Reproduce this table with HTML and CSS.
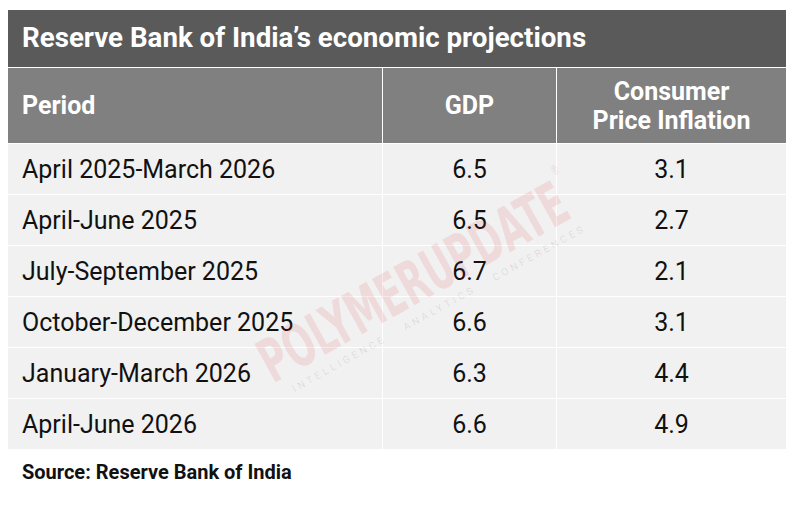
FILE: index.html
```html
<!DOCTYPE html>
<html lang="en">
<head>
<meta charset="utf-8">
<title>Reserve Bank of India’s economic projections</title>
<link rel="stylesheet" href="styles.css">
</head>
<body>
<div class="card">
  <div class="grid">
    <div class="title">Reserve Bank of India’s economic projections</div>
    <div class="hcell left">Period</div>
    <div class="hcell">GDP</div>
    <div class="hcell">Consumer<br>Price Inflation</div>

    <div class="cell left">April 2025-March 2026</div>
    <div class="cell">6.5</div>
    <div class="cell">3.1</div>

    <div class="cell left">April-June 2025</div>
    <div class="cell">6.5</div>
    <div class="cell">2.7</div>

    <div class="cell left">July-September 2025</div>
    <div class="cell">6.7</div>
    <div class="cell">2.1</div>

    <div class="cell left">October-December 2025</div>
    <div class="cell">6.6</div>
    <div class="cell">3.1</div>

    <div class="cell left">January-March 2026</div>
    <div class="cell">6.3</div>
    <div class="cell">4.4</div>

    <div class="cell left">April-June 2026</div>
    <div class="cell">6.6</div>
    <div class="cell">4.9</div>
  </div>
  <div class="watermark" aria-hidden="true">
    <div class="wm-main">POLYMERUPDATE<span class="wm-reg">®</span></div>
    <div class="wm-sub">INTELLIGENCE ANALYTICS CONFERENCES</div>
  </div>
</div>
<p class="source">Source: Reserve Bank of India</p>
</body>
</html>
```
FILE: styles.css
```css
* { box-sizing: border-box; }
html, body { margin: 0; padding: 0; background: #fff; }
body {
  padding: 10px 10px 0 8px;
  font-family: Roboto, "Liberation Sans", sans-serif;
  color: #111;
}
.card {
  position: relative;
  width: 778px;
  overflow: hidden;
}
.grid {
  display: grid;
  grid-template-columns: 374px 173px 229px;
  grid-template-rows: 57px 75px repeat(6, 50px);
  gap: 1px;
  background: #fff;
}
.title {
  grid-column: 1 / 4;
  background: #5a5a5a;
  color: #fff;
  font-weight: 700;
  font-size: 27.7px;
  display: flex;
  align-items: center;
  padding-left: 14px;
  padding-bottom: 2px;
}
.hcell {
  background: #808080;
  color: #fff;
  font-weight: 700;
  font-size: 25px;
  line-height: 29px;
  display: flex;
  align-items: center;
  justify-content: center;
  text-align: center;
}
.cell {
  background: #f1f1f1;
  font-size: 25px;
  display: flex;
  align-items: center;
  justify-content: center;
}
.left {
  justify-content: flex-start;
  padding-left: 14px;
  text-align: left;
}
.watermark {
  position: absolute;
  left: 405px;
  top: 272px;
  transform: translate(-50%, -50%) rotate(-29deg);
  pointer-events: none;
  white-space: nowrap;
}
.wm-main {
  font-family: "Liberation Sans Narrow", "DejaVu Sans Condensed", sans-serif;
  font-weight: 700;
  font-size: 60px;
  line-height: 1;
  color: rgba(215, 40, 40, 0.11);
  transform: scaleX(0.66);
  position: relative;
}
.wm-reg {
  position: absolute;
  top: -6px;
  right: -16px;
  font-size: 14px;
  line-height: 1;
}
.wm-sub {
  position: absolute;
  left: 50%;
  top: 100%;
  transform: translateX(calc(-50% + 10px));
  margin-top: 1px;
  font-family: Roboto, "Liberation Sans", sans-serif;
  font-size: 10px;
  line-height: 1;
  letter-spacing: 3.3px;
  word-spacing: 15px;
  color: rgba(0, 0, 0, 0.1);
}
.source {
  margin: 11px 0 0;
  padding-left: 14px;
  font-weight: 700;
  font-size: 20px;
  color: #111;
}
```
